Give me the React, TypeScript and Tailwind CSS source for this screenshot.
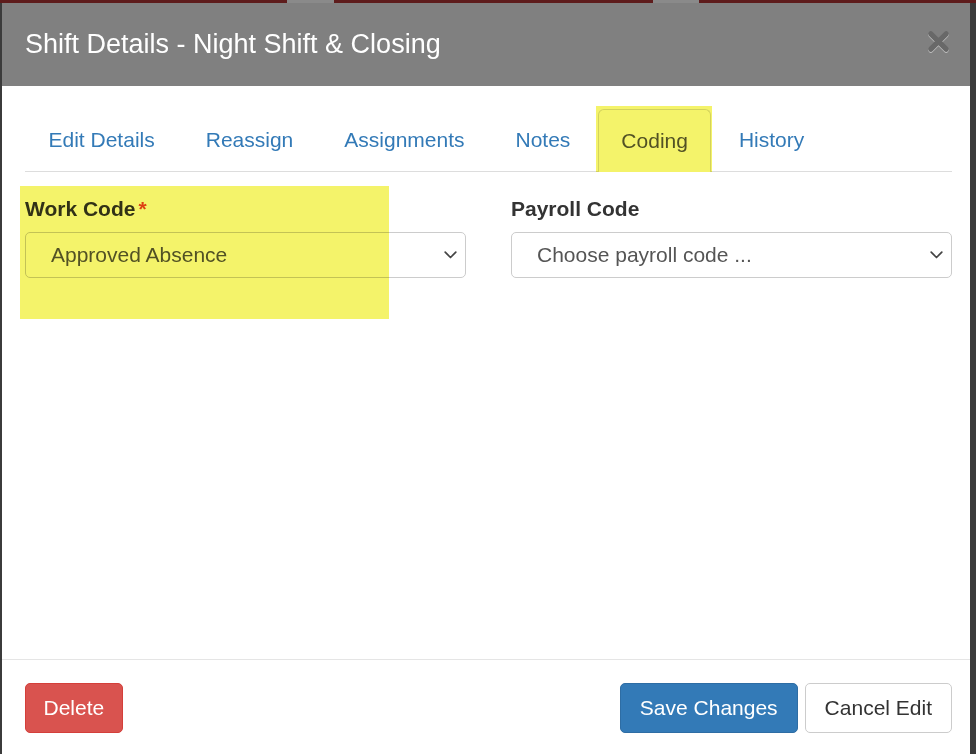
import React from 'react';

const tabs = ['Edit Details', 'Reassign', 'Assignments', 'Notes', 'Coding', 'History'];

function Chevron() {
  return (
    <svg width="13" height="8" viewBox="0 0 13 8" className="shrink-0">
      <path d="M1.2 1.2 L6.5 6.5 L11.8 1.2" fill="none" stroke="#444" strokeWidth="1.7" strokeLinecap="round" strokeLinejoin="round" />
    </svg>
  );
}

function SelectBox({ value }: { value: string }) {
  return (
    <div className="flex h-[46px] items-center justify-between rounded-[5px] border border-[#cccccc] bg-white pl-[25px] pr-[8px]">
      <span className="text-[21px] text-[#555555]">{value}</span>
      <Chevron />
    </div>
  );
}

export default function App() {
  return (
    <div className="relative h-[754px] w-[976px] overflow-hidden bg-[#3b3b3b] font-['Liberation_Sans',Arial,sans-serif]">
      {/* backdrop strip behind the modal */}
      <div className="flex h-[3px] w-full bg-[#5e1c1c]">
        <div className="ml-[287px] w-[47px] bg-[#8a8a8a]" />
        <div className="ml-[319px] w-[46px] bg-[#8a8a8a]" />
      </div>

      <div className="ml-[2px] flex h-[751px] w-[968px] flex-col bg-white">
        {/* header */}
        <div className="flex h-[83px] shrink-0 items-center justify-between bg-[#808080] pl-[23px] pr-[20px]">
          <h1 className="mt-[-1px] text-[27px] leading-none text-white">Shift Details - Night Shift &amp; Closing</h1>
          <svg width="23" height="23" viewBox="0 0 24 24" className="mt-[-6px] drop-shadow-[0_1px_0_rgba(255,255,255,0.5)]">
            <path d="M4 4 L20 20 M20 4 L4 20" stroke="#686868" strokeWidth="5.5" strokeLinecap="round" />
          </svg>
        </div>

        {/* body */}
        <div className="flex-1 pl-[23px] pr-[18px] pt-[20px]">
          <div className="flex h-[66px] items-end border-b border-[#dddddd]">
            {tabs.map((t) => {
              const active = t === 'Coding';
              return (
                <div
                  key={t}
                  className={
                    active
                      ? 'relative mb-[-1px] mr-[4px] flex h-[63px] items-center rounded-t-[6px] border border-b-0 border-[#dddddd] bg-white px-[22.5px] text-[21px] text-[#555555]'
                      : 'mr-[4px] flex h-[62px] items-center border border-transparent px-[22.5px] text-[21px] text-[#337ab7]'
                  }
                >
                  {t}
                  {active && (
                    <div className="pointer-events-none absolute left-[-3px] top-[-4px] h-[66px] w-[116px] bg-[#f4f36a] mix-blend-multiply" />
                  )}
                </div>
              );
            })}
          </div>

          <div className="relative mt-[24px] grid grid-cols-2 gap-[45px]">
            <div>
              <div className="mb-[10px] flex text-[21px] font-bold leading-[26px] text-[#333333]">
                Work Code<span className="ml-[3px] text-[#e8432c]">*</span>
              </div>
              <SelectBox value="Approved Absence" />
            </div>
            <div>
              <div className="mb-[10px] text-[21px] font-bold leading-[26px] text-[#333333]">Payroll Code</div>
              <SelectBox value="Choose payroll code ..." />
            </div>
            <div className="pointer-events-none absolute left-[-5px] top-[-10px] h-[133px] w-[369px] bg-[#f4f36a] mix-blend-multiply" />
          </div>
        </div>

        {/* footer */}
        <div className="flex h-[95px] shrink-0 items-start justify-between border-t border-[#e5e5e5] pl-[23px] pr-[18px] pt-[23px]">
          <button className="h-[50px] rounded-[5px] border border-[#d43f3a] bg-[#d9534f] px-[17.5px] text-[21px] text-white">Delete</button>
          <div className="flex gap-[7px]">
            <button className="h-[50px] rounded-[5px] border border-[#2e6da4] bg-[#337ab7] px-[19px] text-[21px] text-white">Save Changes</button>
            <button className="h-[50px] rounded-[5px] border border-[#cccccc] bg-white px-[19px] text-[21px] text-[#333333]">Cancel Edit</button>
          </div>
        </div>
      </div>
    </div>
  );
}
